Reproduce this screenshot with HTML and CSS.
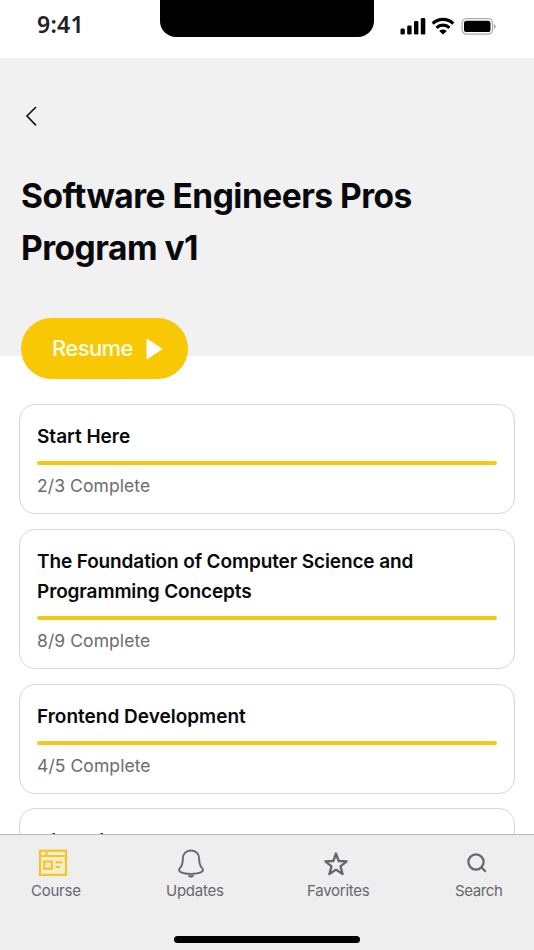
FILE: index.html
```html
<!DOCTYPE html>
<html lang="en">
<head>
<meta charset="utf-8">
<title>Course</title>
<link rel="stylesheet" href="styles.css">
</head>
<body>
<div class="phone">
  <header class="status">
    <span class="time">9:41</span>
    <div class="notch"></div>
    <div class="indicators">
      <svg width="26" height="18" viewBox="0 0 26 18"><rect x="0.5" y="11.5" width="4.3" height="6" rx="1.3"/><rect x="7.2" y="8.5" width="4.4" height="9" rx="1.3"/><rect x="14" y="4" width="4.4" height="13.5" rx="1.3"/><rect x="20.8" y="1" width="4.5" height="16.5" rx="1.3"/></svg>
      <svg class="wifi" width="24" height="18" viewBox="0 0 24 18"><path d="M1.7 6.6a14.700 14.700 0 0 1 20.600 0M5.500 10.800a9.300 9.300 0 0 1 13 0" fill="none" stroke="#000" stroke-width="3.100"/><path d="M12 17.500l-3.800-3.600a5.600 5.600 0 0 1 7.600 0z"/></svg>
      <svg class="battery" width="36" height="18" viewBox="0 0 36 18"><rect x="1" y="1.7" width="30.6" height="15.4" rx="4.6" fill="none" stroke="#aaa" stroke-width="1.2"/><rect x="3" y="3.700" width="26.500" height="11.400" rx="2.600"/><path d="M33 7q1.800.8 1.800 2.500T33 12z" fill="#aaa"/></svg>
    </div>
  </header>
  <section class="hero">
    <svg class="back" width="14" height="22" viewBox="0 0 14 22"><path d="M12 2L3 11l9 9.300" fill="none" stroke="#15171a" stroke-width="1.700"/></svg>
    <h1>Software Engineers Pros<br>Program v1</h1>
    <button class="resume"><span>Resume</span><svg width="17" height="22" viewBox="0 0 17 22"><path d="M1 1.200L16 11 1 20.800z" fill="#fff" stroke="#fff" stroke-linejoin="round"/></svg></button>
  </section>
  <main class="list">
    <article class="card"><h2>Start Here</h2><div class="bar"></div><p>2/3 Complete</p></article>
    <article class="card"><h2 class="long">The Foundation of Computer Science and<br>Programming Concepts</h2><div class="bar"></div><p>8/9 Complete</p></article>
    <article class="card"><h2>Frontend Development</h2><div class="bar"></div><p>4/5 Complete</p></article>
    <article class="card"><h2>Git &amp; GitHub</h2></article>
  </main>
  <nav class="tabs">
    <a class="tab course"><svg width="30" height="28" viewBox="0 0 30 28" fill="none" stroke="#f2c62a" stroke-width="2.200"><rect x="2" y="1.700" width="26" height="24.200" fill="#f5edcc"/><path d="M2 7h26M8.500 2v5"/><rect x="6.300" y="12.500" width="7.600" height="7.200"/><path d="M17.500 13.300h7M17.500 18h4.500"/></svg><span>Course</span></a>
    <a class="tab updates"><svg width="28" height="30" viewBox="0 0 28 30" fill="none" stroke="#63666d" stroke-width="1.900"><path d="M14 1.500C8.800 1.500 5.800 5.200 5.800 10c0 5-.6 7-3.200 9.600-1.300 1.600-.3 2.700 1.200 3.500 4.500 2.300 15.900 2.300 20.400 0 1.500-.8 2.500-1.900 1.200-3.500-2.600-2.600-3.200-4.600-3.200-9.600C22.200 5.200 19.200 1.500 14 1.500z"/><path d="M11.200 26.800h5.600c-1 1.700-4.600 1.700-5.600 0z" fill="#63666d" stroke-width="1"/></svg><span>Updates</span></a>
    <a class="tab favorites"><svg width="26" height="26" viewBox="0 0 26 26" fill="none" stroke="#63666d" stroke-width="2.300" stroke-linejoin="round"><path d="M13 2.500l2.700 7.500 8 .3-6.200 5 2.100 7.700-6.600-4.400L6.400 23l2.100-7.700-6.200-5 8-.3z"/></svg><span>Favorites</span></a>
    <a class="tab search"><svg width="22" height="22" viewBox="0 0 22 22" fill="none" stroke="#63666d" stroke-width="2.200"><circle cx="10" cy="10" r="7.600"/><path d="M15 15l4.800 4.800"/></svg><span>Search</span></a>
    <div class="home"></div>
  </nav>
</div>
</body>
</html>
```
FILE: styles.css
```css
* { box-sizing: border-box; margin: 0; padding: 0; }
body { font-family: Inter, "Liberation Sans", sans-serif; background: #fff; color: #08090b; }
svg { display: block; flex: none; }
.phone { width: 534px; height: 950px; display: flex; flex-direction: column; overflow: hidden; }
.status { height: 58px; flex: none; display: grid; grid-template-columns: 160px 214px 160px; }
.time { padding: 10px 0 0 37px; font-family: "Noto Sans", sans-serif; font-size: 23px; line-height: 28px; font-weight: 600; letter-spacing: .3px; color: #202126; }
.notch { height: 37px; background: #000; border-radius: 0 0 16px 16px; }
.indicators { display: flex; padding: 17px 0 0 26px; }
.wifi { margin-left: 5px; }
.battery { margin-left: 6px; }
.hero { height: 298px; flex: none; background: #f1f1f1; padding: 47px 21px 0; }
.back { margin-left: 3px; }
h1 { margin-top: 44px; font-size: 33.500px; line-height: 51.500px; font-weight: 680; letter-spacing: -.5px; white-space: nowrap; }
.resume { margin-top: 44px; width: 167px; height: 61px; border: 0; border-radius: 31px; background: #f8c805; color: #fffde8; display: flex; align-items: center; padding: 0 0 1px 31px; font: 500 22px/30px Inter, sans-serif; letter-spacing: -.6px; }
.resume svg { margin: 1px 0 0 13px; }
.list { flex: 1; min-height: 0; overflow: hidden; padding: 48px 19px 0; display: flex; flex-direction: column; gap: 14.800px; }
.card { flex: none; border: 1px solid #d8d8d8; border-radius: 16px; padding: 17px 17px 13px; }
.card h2 { font-size: 19px; line-height: 30px; font-weight: 600; white-space: nowrap; }
.card .long { letter-spacing: -.12px; }
.bar { height: 4px; border-radius: 2px; background: #f5c817; margin: 9px 0 7px; }
.card p { font-size: 17.500px; line-height: 28px; letter-spacing: .08px; color: #6b6c70; }
.card:last-child { height: 110px; padding-top: 17.400px; }
.tabs { position: relative; height: 116px; flex: none; background: #eee; border-top: 1px solid #b8b8b8; color: #65676d; font-size: 15px; display: flex; }
.tab { display: flex; flex-direction: column; height: 66px; padding-top: 14px; }
.tab span { line-height: 20px; margin-top: auto; letter-spacing: -.25px; }
.course { margin-left: 31px; width: 50px; }
.course svg { margin-left: 7px; }
.updates { margin-left: 85px; width: 57px; }
.updates svg { margin-left: 11px; }
.favorites { margin-left: 84px; width: 63px; }
.favorites svg { margin: 2px 0 0 16px; }
.search { margin-left: 85px; width: 48px; }
.search svg { margin: 3px 0 0 11px; }
.search span { letter-spacing: -.4px; }
.home { position: absolute; left: 174px; top: 101px; width: 186px; height: 7px; border-radius: 4px; background: #000; }
```
